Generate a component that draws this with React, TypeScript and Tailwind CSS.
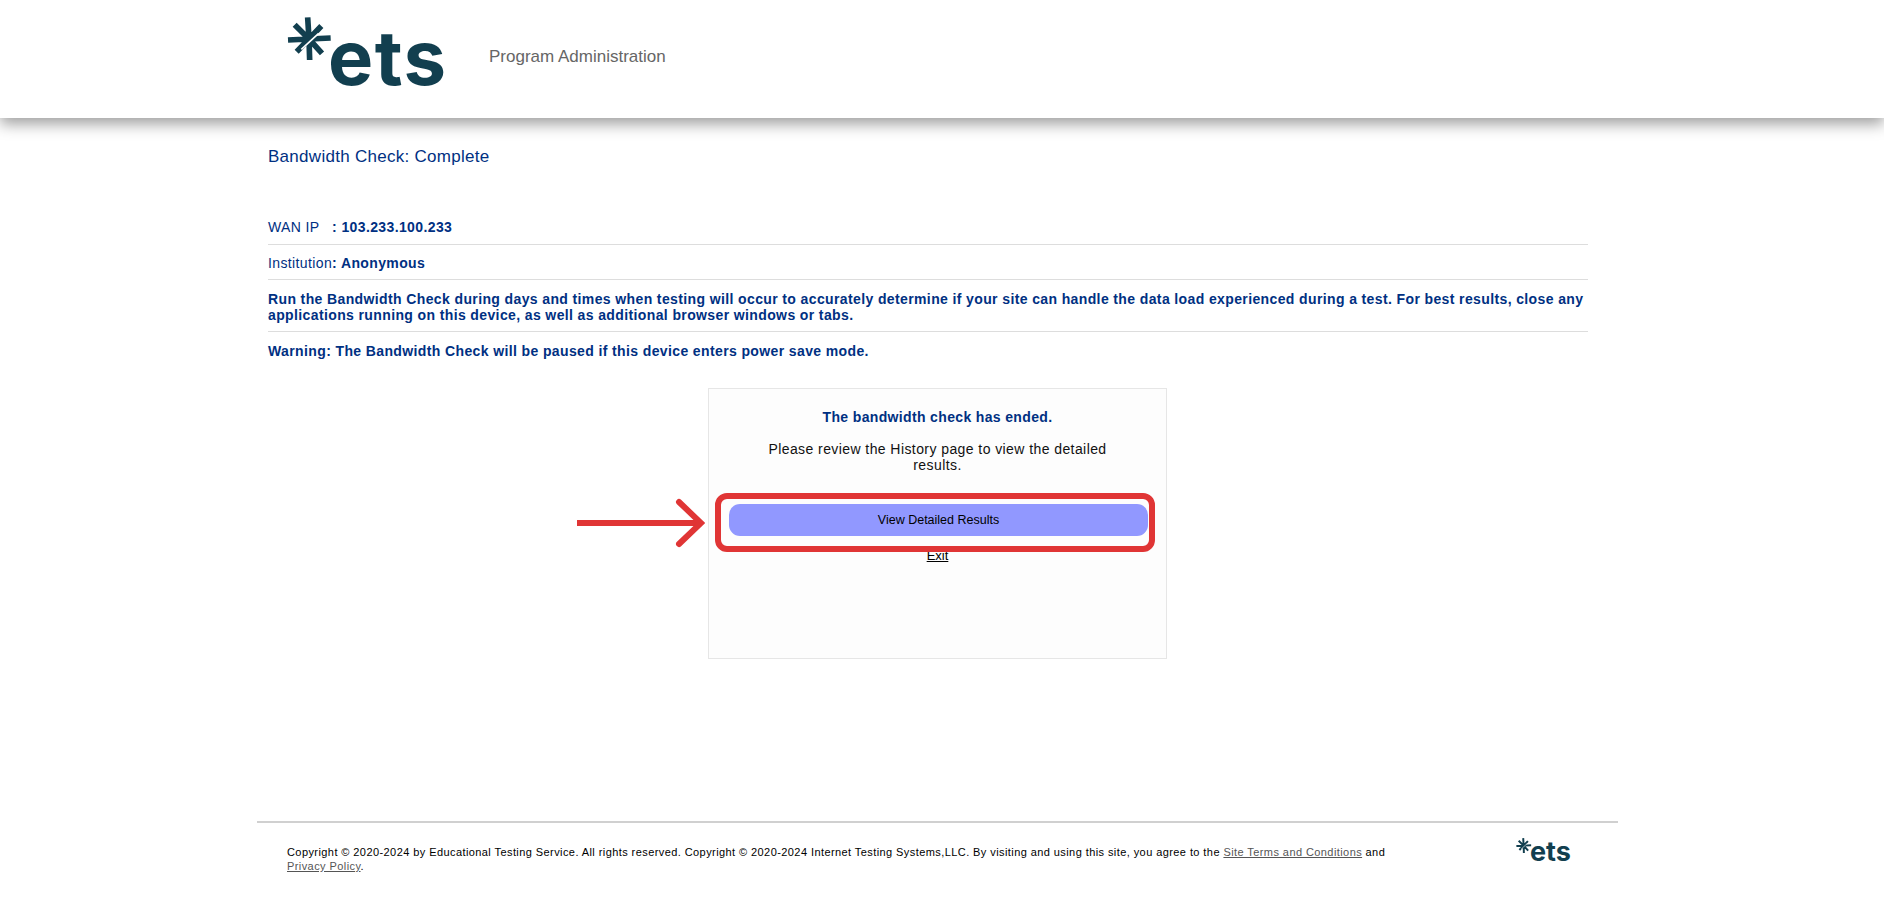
const navy = "text-[#003082]";

function Asterisk({ className }: { className: string }) {
  return (
    <svg viewBox="0 0 156 156" className={className} stroke="#123f4f" strokeWidth="17" fill="none">
      <path d="M75 75 L71 10 M75 75 L112 36 M75 75 L140 72 M75 75 L114 118 M75 75 L77 138 M75 75 L38 113 M75 75 L12 78 M75 75 L32 32" />
      <path d="M52 106 L104 58" stroke="#ffffff" strokeWidth="5" />
    </svg>
  );
}

function EtsLogo({ small }: { small?: boolean }) {
  return (
    <div className={small ? "relative w-[56px] h-[28px]" : "relative w-[156px] h-[76px]"}>
      <Asterisk className={small ? "absolute left-[-1px] top-[-1px] w-[18px] h-[18px]" : "absolute left-[-3px] top-[-3px] w-[52px] h-[52px]"} />
      <span
        className={
          small
            ? "absolute left-[14px] top-[-3px] font-['Inter',sans-serif] font-bold text-[27px] leading-[34px] tracking-[0px] text-[#123f4f]"
            : "absolute left-[41px] top-[0px] font-['Inter',sans-serif] font-bold text-[76px] leading-[80px] tracking-[1.5px] text-[#123f4f]"
        }
      >
        ets
      </span>
    </div>
  );
}

export default function App() {
  return (
    <div className="relative min-h-[911px] bg-white font-['Liberation_Sans',Arial,sans-serif]">
      <header className="relative h-[118px] bg-white shadow-[0_6px_14px_rgba(0,0,0,0.38)] flex items-start pl-[287px]">
        <div className="mt-[17px]">
          <EtsLogo />
        </div>
        <span className="ml-[46px] mt-[47px] text-[17px] leading-[20px] text-[#666666]">Program Administration</span>
      </header>

      <main className="ml-[268px] w-[1320px]">
        <h1 className={`pt-[29px] h-[100px] text-[17px] leading-[20px] tracking-[0.28px] ${navy}`}>Bandwidth Check: Complete</h1>

        <div className={`text-[14px] leading-[16px] tracking-[0.38px] ${navy}`}>
          <div className="pt-[1px] h-[27px] border-b border-[#dddddd]">
            WAN IP &nbsp; <b>: 103.233.100.233</b>
          </div>
          <div className="pt-[10px] h-[35px] border-b border-[#dddddd]">
            Institution<b>: Anonymous</b>
          </div>
          <div className="pt-[11px] h-[52px] border-b border-[#dddddd] font-bold">
            Run the Bandwidth Check during days and times when testing will occur to accurately determine if your site can handle the data load experienced during a test. For best results, close any applications running on this device, as well as additional browser windows or tabs.
          </div>
          <div className="pt-[11px] font-bold">Warning: The Bandwidth Check will be paused if this device enters power save mode.</div>
        </div>

        <section className="mt-[29px] ml-[440px] w-[459px] h-[271px] border border-[#e6e6e6] bg-[#fdfdfd] flex flex-col items-center">
          <p className={`mt-[20px] text-[14px] leading-[16px] tracking-[0.35px] font-bold ${navy}`}>The bandwidth check has ended.</p>
          <p className="mt-[16px] w-[340px] text-center text-[14px] leading-[16px] tracking-[0.42px] text-[#111111]">
            Please review the History page to view the detailed results.
          </p>
          <button className="mt-[31px] ml-[2px] w-[419px] h-[32px] rounded-[11px] bg-[#9198ff] text-[12.5px] text-black">
            View Detailed Results
          </button>
          <a className="mt-[12px] text-[13px] leading-[15px] underline text-black">Exit</a>
        </section>
      </main>

      {/* red annotation drawn over the screenshot */}
      <div className="absolute left-[715px] top-[493px] w-[440px] h-[59px] border-[6px] border-[#e03535] rounded-[12px]" />
      <svg className="absolute left-[577px] top-[498px] w-[128px] h-[50px]" viewBox="0 0 128 50" fill="none" stroke="#e03535" strokeWidth="6" strokeLinecap="round">
        <path d="M0 25 H122" strokeLinecap="butt" />
        <path d="M102 4 L124 25 L102 46" />
      </svg>

      <footer className="absolute left-[257px] top-[821px] w-[1361px] border-t-2 border-[#d0d0d0] pl-[30px] pt-[22px] flex items-start">
        <p className="w-[1110px] text-[11px] leading-[14px] tracking-[0.42px] text-black">
          Copyright © 2020-2024 by Educational Testing Service. All rights reserved. Copyright © 2020-2024 Internet Testing Systems,LLC. By visiting and using this site, you agree to the{" "}
          <a className="underline text-[#555555]">Site Terms and Conditions</a> and <a className="underline text-[#555555]">Privacy Policy</a>.
        </p>
        <div className="ml-[119px] -mt-[7px]">
          <EtsLogo small />
        </div>
      </footer>
    </div>
  );
}
